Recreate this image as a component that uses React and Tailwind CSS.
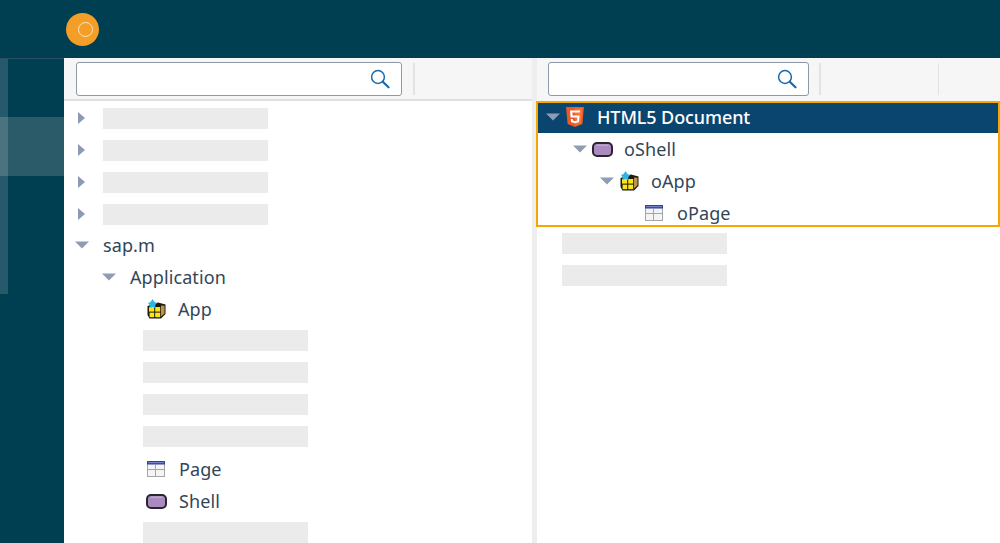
const Collapsed = () => (
  <svg width="10" height="14" viewBox="0 0 10 14" className="shrink-0"><path d="M1 1 L8 7 L1 13 Z" fill="#8b9bb4" /></svg>
);

const Expanded = () => (
  <svg width="14" height="8" viewBox="0 0 14 8" className="shrink-0"><path d="M0 0.5 H14 L7 7.5 Z" fill="#8e9db3" /></svg>
);

const SearchIcon = () => (
  <svg width="20" height="20" viewBox="0 0 20 20" fill="none" className="shrink-0">
    <circle cx="8" cy="8" r="6.4" stroke="#1a68ae" strokeWidth="1.5" />
    <path d="M12.8 12.8 L18.5 18.3" stroke="#1a68ae" strokeWidth="2.2" strokeLinecap="round" />
  </svg>
);

const Html5Icon = () => (
  <svg width="18" height="20" viewBox="0 0 18 20" className="shrink-0">
    <path d="M0 0 H18 L16.4 17 L9 20 L1.6 17 Z" fill="#ea5a27" />
    <path d="M9 1.5 H16.4 L15 16 L9 18.4 Z" fill="#f4763a" />
    <path d="M14 3.6 H4 L4.6 10.4 H11.4 L11.1 13.6 L9 14.3 L6.9 13.6 L6.8 12 H4.8 L5 15 L9 16.3 L13 15 L13.6 8.4 H6.6 L6.3 5.6 H13.8 Z" fill="#fff" />
  </svg>
);

const ShellIcon = () => (
  <svg width="21" height="15" viewBox="0 0 21 15" className="shrink-0">
    <rect x="1" y="1" width="19" height="13" rx="4" fill="#a98bbd" stroke="#2c2433" strokeWidth="2" />
    <path d="M4.5 3.2 H16.5" stroke="#c9b3d6" strokeWidth="1" />
  </svg>
);

const AppIcon = () => (
  <svg width="20" height="20" viewBox="0 0 20 20" className="shrink-0">
    <path d="M1.5 7 L12 3.5 L19.5 5.5 V15 L15 19.5 H3.5 L1.5 16 Z" fill="#1d1a10" />
    <path d="M15 6.5 L18.5 6.8 V14.5 L15 17.5 Z" fill="#c0924a" />
    <rect x="3" y="8" width="5.2" height="4.6" fill="#f8e51e" />
    <rect x="9.2" y="8" width="5" height="4.6" fill="#f8e51e" />
    <rect x="3.6" y="13.6" width="4.6" height="4.6" fill="#f8e51e" />
    <rect x="9.2" y="13.6" width="5" height="4.6" fill="#f8e51e" />
    <path d="M6.5 0 L8.4 3 L11 4 L9.2 6.2 L9.4 9 L6.5 8 L3.6 9 L3.8 6.2 L2 4 L4.6 3 Z" fill="#2bb6e6" />
  </svg>
);

const PageIcon = () => (
  <svg width="18" height="16" viewBox="0 0 18 16" className="shrink-0">
    <rect x="0.5" y="0.5" width="17" height="15" fill="#f4f4f4" stroke="#a6a6a6" />
    <rect x="0" y="0" width="18" height="3.5" fill="#2e3f9e" />
    <path d="M1 1.7 H17" stroke="#8591d4" strokeWidth="1" />
    <path d="M0.5 8.5 H17.5 M8.5 4 V15.5" stroke="#a6a6a6" strokeWidth="1" />
  </svg>
);

const Skeleton = () => <div className="h-[21px] w-[165px] bg-[#ebebeb]" />;

// one tree row, 32px high
const Row = ({ indent, arrow, icon, label, iconSlot = 'w-auto' }) => (
  <div className={`flex h-8 items-center ${indent}`}>
    {arrow}
    {icon && <div className={iconSlot}>{icon}</div>}
    <span className="text-[18px] leading-none tracking-[0.1px] text-[#32465a]">{label}</span>
  </div>
);

const SkeletonRow = ({ pad, arrow }) => (
  <div className={`flex h-8 items-center ${pad}`}>
    {arrow}
    <Skeleton />
  </div>
);

const SearchBox = ({ width }) => (
  <div className={`flex h-[34px] ${width} items-center justify-end rounded-[3px] border-[1.5px] border-[#8d99a8] bg-white pr-[11px]`}>
    <SearchIcon />
  </div>
);

const Divider = () => <div className="h-[32px] w-[1.5px] bg-[#e2e3e4]" />;

export default function App() {
  return (
    <div className="flex h-[543px] w-[1000px] flex-col overflow-hidden bg-white font-['Noto_Sans',sans-serif]">
      {/* Shell header */}
      <header className="flex h-[58px] shrink-0 items-start bg-[#003e52] pl-[66px] pt-[13px]">
        <div className="flex h-[33px] w-[33px] items-center justify-center rounded-full bg-[#f39f27]">
          <div className="ml-[6px] h-[15px] w-[15px] rounded-full border-[1.5px] border-[#fde6c0]" />
        </div>
      </header>

      <div className="flex min-h-0 flex-1">
        {/* Side nav */}
        <aside className="relative w-[64px] shrink-0 border-t border-[#2a4f66] bg-[#003e52]">
          <div className="mt-[58px] h-[59px] bg-[#2b5a69]" />
          <div className="absolute left-0 top-0 h-[235px] w-[8px] bg-white/15" />
        </aside>

        {/* Control tree */}
        <section className="flex w-[468px] shrink-0 flex-col">
          <div className="flex h-[43px] shrink-0 items-start gap-[11px] border-b-2 border-[#dfe0e2] bg-[#f6f6f7] pl-[12px] pt-[4px]">
            <SearchBox width="w-[326px]" />
            <div className="mt-px"><Divider /></div>
          </div>
          <div className="min-h-0 flex-1 overflow-hidden pt-px">
            <SkeletonRow pad="pl-[13px]" arrow={<div className="w-[26px]"><Collapsed /></div>} />
            <SkeletonRow pad="pl-[13px]" arrow={<div className="w-[26px]"><Collapsed /></div>} />
            <SkeletonRow pad="pl-[13px]" arrow={<div className="w-[26px]"><Collapsed /></div>} />
            <SkeletonRow pad="pl-[13px]" arrow={<div className="w-[26px]"><Collapsed /></div>} />
            <div className="-mt-[2px]">
              <Row indent="pl-[11px] pt-[2px]" arrow={<div className="w-[28px]"><Expanded /></div>} label="sap.m" />
              <Row indent="pl-[38px] pt-[2px]" arrow={<div className="w-[28px]"><Expanded /></div>} label="Application" />
              <Row indent="pl-[82px] pt-[2px]" icon={<AppIcon />} iconSlot="w-[32px]" label="App" />
              <SkeletonRow pad="pl-[79px]" />
              <SkeletonRow pad="pl-[79px]" />
              <SkeletonRow pad="pl-[79px]" />
              <SkeletonRow pad="pl-[79px]" />
              <Row indent="pl-[83px] pt-[2px]" icon={<PageIcon />} iconSlot="w-[32px]" label="Page" />
              <Row indent="pl-[82px] pt-[2px]" icon={<ShellIcon />} iconSlot="w-[33px]" label="Shell" />
              <SkeletonRow pad="pl-[79px]" />
            </div>
          </div>
        </section>

        {/* Splitter */}
        <div className="w-[5px] shrink-0 bg-[#eeeeee]" />

        {/* Element tree */}
        <section className="flex min-w-0 flex-1 flex-col">
          <div className="flex h-[43px] shrink-0 items-start gap-[10px] bg-[#f6f6f7] pl-[11px] pt-[4px]">
            <SearchBox width="w-[261px]" />
            <div className="mt-px"><Divider /></div>
            <div className="ml-[107px] mt-px"><Divider /></div>
          </div>
          <div className="-ml-px h-[126px] shrink-0 overflow-hidden border-2 border-[#f5a800] bg-white">
            <div className="flex h-[30px] items-center bg-[#0a4570] pb-[2px] pl-[8px]">
              <div className="w-[20px]"><Expanded /></div>
              <div className="w-[31px]"><Html5Icon /></div>
              <span className="text-[18px] font-medium leading-none tracking-[-0.1px] text-white">HTML5 Document</span>
            </div>
            <Row indent="pl-[35px]" arrow={<div className="w-[19px]"><Expanded /></div>} icon={<ShellIcon />} iconSlot="w-[32px]" label="oShell" />
            <Row indent="pl-[62px]" arrow={<div className="w-[19px]"><Expanded /></div>} icon={<AppIcon />} iconSlot="w-[32px]" label="oApp" />
            <Row indent="pl-[107px]" icon={<PageIcon />} iconSlot="w-[32px]" label="oPage" />
          </div>
          <div className="pl-[25px]">
            <div className="flex h-8 items-center"><Skeleton /></div>
            <div className="flex h-8 items-center"><Skeleton /></div>
          </div>
        </section>
      </div>
    </div>
  );
}
